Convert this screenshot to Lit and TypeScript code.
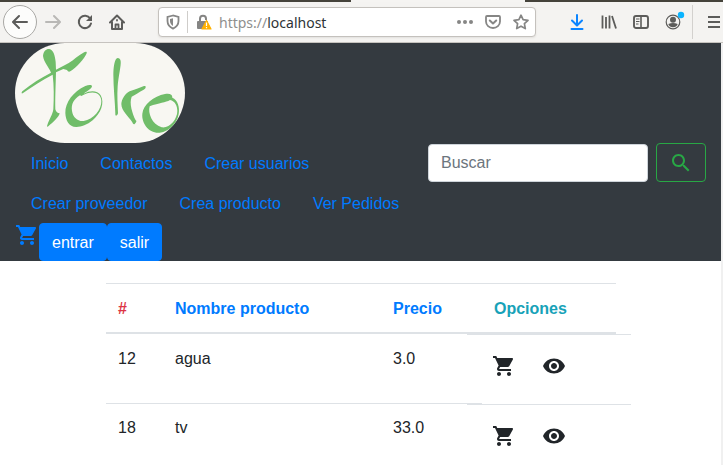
import { LitElement, html, css, svg } from "lit";
import { customElement, property } from "lit/decorators.js";

const cartPath = "M7 18c-1.1 0-1.99.9-1.99 2S5.9 22 7 22s2-.9 2-2-.9-2-2-2zM1 2v2h2l3.6 7.59-1.35 2.45c-.16.28-.25.61-.25.96 0 1.1.9 2 2 2h12v-2H7.42c-.14 0-.25-.11-.25-.25l.03-.12.9-1.63h7.45c.75 0 1.41-.41 1.75-1.03l3.58-6.49c.08-.14.12-.31.12-.48 0-.55-.45-1-1-1H5.21l-.94-2H1zm16 16c-1.1 0-1.99.9-1.99 2s.89 2 1.99 2 2-.9 2-2-.9-2-2-2z";
const eyePath = "M12 4.5C7 4.5 2.73 7.61 1 12c1.73 4.39 6 7.5 11 7.5s9.27-3.11 11-7.5c-1.73-4.39-6-7.5-11-7.5zM12 17c-2.76 0-5-2.24-5-5s2.24-5 5-5 5 2.24 5 5-2.24 5-5 5zm0-8c-1.66 0-3 1.34-3 3s1.34 3 3 3 3-1.34 3-3-1.34-3-3-3z";
const searchPath = "M15.5 14h-.79l-.28-.27C15.41 12.59 16 11.11 16 9.5 16 5.91 13.09 3 9.5 3S3 5.91 3 9.5 5.91 16 9.5 16c1.61 0 3.09-.59 4.23-1.57l.27.28v.79l5 4.99L20.49 19l-4.99-5zm-6 0C7.01 14 5 11.99 5 9.5S7.01 5 9.5 5 14 7.01 14 9.5 11.99 14 9.5 14z";

const icon24 = (d: string) => html`<svg class="icon" width="24" height="24" viewBox="0 0 24 24" fill="currentColor" aria-hidden="true"><path d=${d}></path></svg>`;

const stroke16 = (body: unknown) => html`<svg class="icon" width="16" height="16" viewBox="0 0 16 16" fill="none" stroke="currentColor" stroke-width="2" stroke-linecap="round" stroke-linejoin="round" aria-hidden="true">${body}</svg>`;

@customElement("browser-bar")
export class BrowserBar extends LitElement {
  static styles = css`
    :host { display: block; font-family: "Noto Sans", sans-serif; color: #5c5c5a; }
    * { box-sizing: border-box; }
    .tabs { display: flex; height: 2px; background: #f5f4f2; }
    .tab-left { flex: 351; background: #45433b; }
    .tab-active { flex: 174; }
    .tab-right { flex: 198; background: #45433b; }
    .bar { display: flex; align-items: center; height: 41px; background: #f4f3f1; border-bottom: 1px solid #c6c3bf; padding-left: 3px; }
    .tool { display: flex; flex: none; align-items: center; justify-content: center; width: 32px; height: 32px; padding: 0; border: 0; background: none; color: inherit; }
    .back { width: 34px; height: 34px; border: 1px solid #a9a8a5; border-radius: 50%; background: #fcfcfb; }
    .dim { color: #b9b8b6; }
    .blue { color: #0a84ff; }
    .menu { width: 18px; }
    .icon { display: block; flex: none; }
    .address { display: flex; flex: 1; min-width: 0; align-items: center; height: 30px; margin: 0 25px; border: 1px solid #c4c1bd; border-radius: 4px; background: #fff; box-shadow: 0 1px 2px #e2e0dd; color: #868685; }
    .address .tool { width: 28px; height: 28px; }
    .rule { width: 1px; height: 22px; background: #cfcdca; }
    .secure { margin: 0 1px 0 2px; }
    .url { display: flex; flex: 1; min-width: 0; padding-top: 1px; font-size: 14px; line-height: 20px; color: #8f8f8e; }
    .host { flex: 1; min-width: 0; padding: 0; border: 0; outline: 0; background: none; font: inherit; color: #2e3436; }
    .divider { flex: none; width: 1px; height: 34px; margin: 0 12px 0 3px; background: #d3d1ce; }
  `;

  render() {
    return html`
      <div class="tabs"><span class="tab-left"></span><span class="tab-active"></span><span class="tab-right"></span></div>
      <div class="bar">
        <button class="tool back" aria-label="Atrás">${stroke16(svg`<path d="M15 8H1.500M7 2 1 8l6 6"></path>`)}</button>
        <button class="tool dim" aria-label="Adelante">${stroke16(svg`<path d="M1 8h13.500M9 2l6 6-6 6"></path>`)}</button>
        <button class="tool" aria-label="Recargar">${stroke16(svg`<path d="M13.200 4.500A6.200 6.200 0 1 0 14 9.500"></path><path d="M15 1v6H9z" fill="currentColor" stroke="none"></path>`)}</button>
        <button class="tool" aria-label="Página principal">${stroke16(svg`<path d="M1 8.500 8 1.500l7 7M3 8v7h10V8"></path><path d="M6.500 15v-4.500h3V15M8 6v.5" stroke-width="1.800"></path>`)}</button>

        <div class="address">
          <button class="tool" aria-label="Protección">
            <svg class="icon" width="14" height="16" viewBox="0 0 14 16" fill="none" stroke="currentColor" stroke-width="1.800"><path d="M7 1.500 1.500 3v4c0 3.500 2 6 5.500 7.600 3.500-1.600 5.500-4.100 5.500-7.600V3z"></path><path d="M7 4.200 4 5v2c0 2.200 1 3.800 3 5z" fill="currentColor" stroke="none"></path></svg>
          </button>
          <span class="rule"></span>
          <button class="tool secure" aria-label="Conexión">
            <svg class="icon" width="16" height="16" viewBox="0 0 16 16"><path d="M4 8V4.800a3 3 0 0 1 6 0V6" fill="none" stroke="#858584" stroke-width="2"></path><rect x="1" y="7" width="11" height="8" rx="1" fill="#858584"></rect><path d="M10.500 6.500 15 15H6z" fill="#ffb100" stroke="#ffb100" stroke-width="1.200" stroke-linejoin="round"></path><path d="M10.500 8.500v3.500M10.500 13v1.200" stroke="#fff" stroke-width="1.200"></path></svg>
          </button>
          <label class="url"><span>https://</span><input class="host" type="text" aria-label="Dirección" .value=${"localhost"} /></label>
          <button class="tool" aria-label="Acciones"><svg class="icon" width="16" height="16" viewBox="0 0 16 16" fill="currentColor"><circle cx="2" cy="8" r="2"></circle><circle cx="8" cy="8" r="2"></circle><circle cx="14" cy="8" r="2"></circle></svg></button>
          <button class="tool" aria-label="Pocket">${stroke16(svg`<path d="M2 2h12q1 0 1 1v4.500a7 6.500 0 0 1-14 0V3q0-1 1-1z" stroke-width="1.800"></path><path d="M4.800 6.500 8 9.500l3.200-3"></path>`)}</button>
          <button class="tool" aria-label="Marcador">${stroke16(svg`<path d="m8 1.200 2.100 4.500 4.900.6-3.600 3.400.9 4.900L8 12.200l-4.300 2.400.9-4.900L1 6.300l4.900-.6z" stroke-width="1.700"></path>`)}</button>
        </div>

        <button class="tool blue" aria-label="Descargas">${stroke16(svg`<path d="M8 1v10M3 6.500l5 5 5-5M2.500 15h11"></path>`)}</button>
        <button class="tool" aria-label="Catálogo"><svg class="icon" width="16" height="16" viewBox="0 0 16 16" fill="none" stroke="currentColor" stroke-width="1.800"><path d="M1.500 1.500v13M5 3v11.500M8.500 1.500v13M11 2l4 12.500"></path></svg></button>
        <button class="tool" aria-label="Barra lateral"><svg class="icon" width="16" height="16" viewBox="0 0 16 16" fill="none" stroke="currentColor"><rect x="1" y="2" width="14" height="12" rx="2" stroke-width="1.900"></rect><path d="M8 2v12" stroke-width="1.600"></path><path d="M3 5h3.500M3 7.500h3.500M3 10h2.500"></path></svg></button>
        <button class="tool" aria-label="Cuenta"><svg class="icon" width="24" height="24" viewBox="0 0 24 24"><circle cx="12" cy="12" r="6.800" fill="none" stroke="currentColor" stroke-width="1.200"></circle><circle cx="12" cy="9.800" r="3" fill="currentColor"></circle><path d="M7.300 14q4.700-2.200 9.400 0a5 5 0 0 1-9.400 0z" fill="currentColor"></path><circle cx="20" cy="5" r="3.200" fill="#0ab4ff"></circle></svg></button>
        <span class="divider"></span>
        <button class="tool menu" aria-label="Menú"><svg class="icon" width="12" height="14" viewBox="0 0 12 14" stroke="currentColor" stroke-width="2"><path d="M0 2h12M0 7h12M0 12h12"></path></svg></button>
      </div>
    `;
  }
}

@customElement("shop-nav")
export class ShopNav extends LitElement {
  static styles = css`
    :host { display: block; padding: 0 15px; background: #343a40; }
    * { box-sizing: border-box; }
    .icon { display: block; }
    .brand { display: block; width: 170px; height: 100px; border-radius: 50px; background: #f8f7f2; overflow: hidden; }
    .row { display: flex; align-items: flex-start; justify-content: space-between; }
    .links { display: flex; flex: 1; flex-wrap: wrap; margin: 0; padding: 0; list-style: none; }
    .link { display: block; padding: 9px 16px 7px; color: #007bff; text-decoration: none; }
    .search { display: flex; gap: 8px; align-items: center; }
    .query { width: 220px; height: 38px; padding: 6px 12px; border: 1px solid #ced4da; border-radius: 4px; background: #fff; font: inherit; color: #495057; }
    .query::placeholder { color: #6c757d; opacity: 1; }
    .go { padding: 7px 12px 6px; border: 1px solid #28a745; border-radius: 4px; background: none; color: #28a745; }
    .account { display: flex; align-items: flex-start; }
    .cart { color: #007bff; }
    .solid { height: 38px; padding: 7px 12px 5px; border: 1px solid #007bff; border-radius: 4px; background: #007bff; color: #fff; font: inherit; }
  `;

  private links = ["Inicio", "Contactos", "Crear usuarios", "Crear proveedor", "Crea producto", "Ver Pedidos"];

  render() {
    return html`
      <a class="brand" href="#" aria-label="toko">
        <svg class="icon" width="170" height="100" viewBox="45 9 510 300" fill="#70bd69">
          <path d="M129 48C130 33 139 26 148 27C160 29 165 47 167 66L168 89L205 70C223 59 235 45 250 38C257 34 262 35 260 40C253 58 229 83 211 94C206 97 204 94 201 90L190 87L168 97C167 137 165 177 166 208C168 216 173 220 179 220C177 231 160 246 145 259C142 262 140 260 142 255C148 237 158 224 160 208C162 172 162 138 158 104C124 121 94 142 68 160C64 162 64 157 67 154C94 131 124 113 153 98C147 81 132 69 129 48Z"></path>
          <path fill-rule="evenodd" d="M196 219C195 188 220 154 256 138C266 134 276 134 276 139C275 146 262 153 251 161C271 150 293 151 302 166C315 189 302 221 278 241C262 255 243 260 230 261C207 262 197 242 196 219ZM244 168L240 166C221 178 213 193 216 213C219 233 234 245 251 243C280 239 305 209 304 183C303 157 277 149 244 168Z"></path>
          <path d="M340 103C340 83 343 63 349 56C353 52 361 55 362 63C364 76 355 110 353 139C351 168 353 195 354 219C354 226 345 231 346 222C345 185 340 143 340 103Z"></path>
          <path d="M364 192C365 178 375 161 389 154C404 149 418 143 432 138C440 136 438 146 431 149C418 156 405 164 395 170C387 190 397 220 407 241C411 242 409 248 404 252C401 254 398 251 397 247C386 229 364 213 364 192Z"></path>
          <path fill-rule="evenodd" d="M427 221C430 194 461 168 495 162C510 160 517 163 517 173C533 179 540 202 536 222C531 251 509 274 479 278C447 281 424 249 427 221ZM510 180C497 188 478 188 449 199C443 219 456 254 485 262C508 266 532 238 532 213C532 198 525 183 510 180Z"></path>
        </svg>
      </a>
      <div class="row">
        <ul class="links">
          ${this.links.map((l) => html`<li><a class="link" href="#">${l}</a></li>`)}
        </ul>
        <form class="search" @submit=${(e: Event) => e.preventDefault()}>
          <input class="query" type="search" placeholder="Buscar" aria-label="Buscar" />
          <button class="go" type="submit" aria-label="Buscar">${icon24(searchPath)}</button>
        </form>
      </div>
      <div class="account">
        <a class="cart" href="#" aria-label="Carrito">${icon24(cartPath)}</a>
        <button class="solid">entrar</button>
        <button class="solid">salir</button>
      </div>
    `;
  }
}

interface Product { id: number; name: string; price: string; }

@customElement("product-table")
export class ProductTable extends LitElement {
  static styles = css`
    :host { display: grid; grid-template-columns: 106fr 510fr 105fr; padding-top: 22px; }
    * { box-sizing: border-box; }
    .icon { display: block; }
    .table { grid-column: 2; width: 100%; table-layout: fixed; border-spacing: 0; color: #212529; }
    .c-id { width: 57px; }
    .c-name { width: 218px; }
    .c-price { width: 101px; }
    .head { padding: 13px 12px 11px; border-top: 1px solid #dee2e6; border-bottom: 2px solid #dee2e6; text-align: left; font-weight: 700; color: #007bff; }
    .red { color: #dc3545; }
    .teal { color: #17a2b8; }
    .cell { height: 69px; padding: 12px; border-top: 1px solid #dee2e6; vertical-align: top; }
    .product:first-child .cell { border-top-color: transparent; }
    .options { padding: 1px 0 0; vertical-align: top; }
    .product:first-child .options { padding-top: 0; }
    .actions { display: flex; gap: 2px; margin: 0 -15px; padding: 7px 13px 0; border-top: 1px solid #dee2e6; }
    .action { padding: 12px; border: 0; background: none; color: inherit; }
  `;

  @property({ attribute: false }) products: Product[] = [
    { id: 12, name: "agua", price: "3.0" },
    { id: 18, name: "tv", price: "33.0" },
  ];

  render() {
    return html`
      <table class="table">
        <colgroup><col class="c-id" /><col class="c-name" /><col class="c-price" /><col /></colgroup>
        <thead>
          <tr>
            <th class="head red" scope="col">#</th>
            <th class="head" scope="col">Nombre producto</th>
            <th class="head" scope="col">Precio</th>
            <th class="head teal" scope="col">Opciones</th>
          </tr>
        </thead>
        <tbody>
          ${this.products.map((p) => html`
            <tr class="product">
              <td class="cell">${p.id}</td>
              <td class="cell">${p.name}</td>
              <td class="cell">${p.price}</td>
              <td class="options">
                <div class="actions">
                  <button class="action" aria-label="Agregar al carrito">${icon24(cartPath)}</button>
                  <button class="action" aria-label="Ver">${icon24(eyePath)}</button>
                </div>
              </td>
            </tr>`)}
        </tbody>
      </table>
    `;
  }
}

@customElement("app-root")
export class AppRoot extends LitElement {
  static styles = css`
    :host { display: flex; flex-direction: column; height: 100vh; overflow: hidden; background: #fff; font: 16px/24px "Liberation Sans", Arial, sans-serif; }
    .bar { flex: none; }
    .page { flex: 1; min-height: 0; overflow: hidden; border-right: 2px solid #f0f0f0; }
  `;

  render() {
    return html`
      <browser-bar class="bar"></browser-bar>
      <main class="page">
        <shop-nav></shop-nav>
        <product-table></product-table>
      </main>
    `;
  }
}
